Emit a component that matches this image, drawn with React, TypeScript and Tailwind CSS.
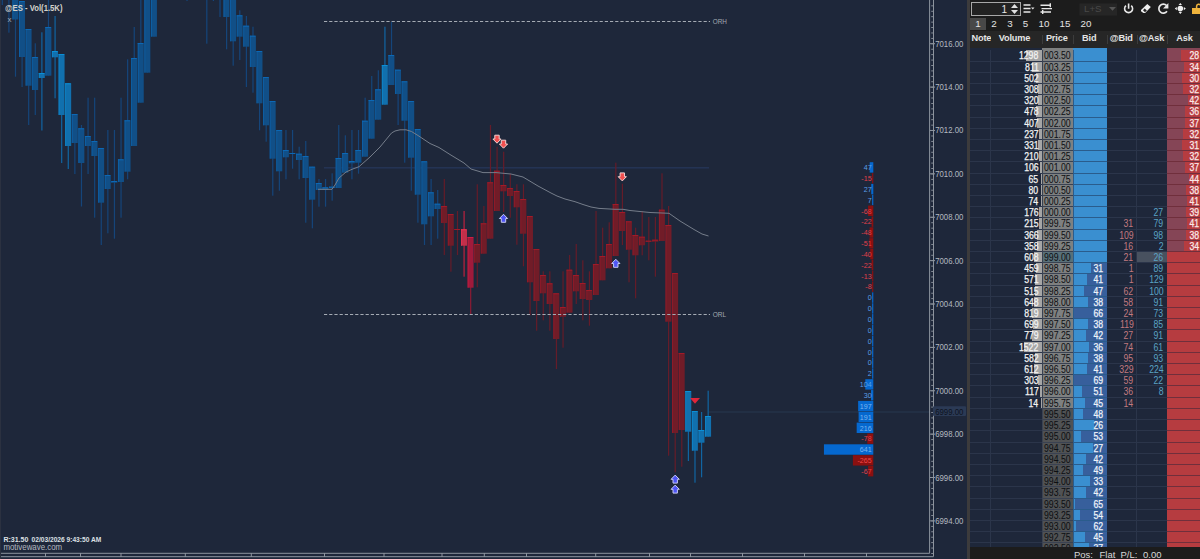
import type { ReactNode } from 'react';

type Tone = 'b' | 'c' | 'r' | 'p' | 'k';
type Candle = [number, number, number, number, number, Tone];

const tones: Record<Tone, { fill: string; edge: string; wick: string }> = {
  b: { fill: '#114f87', edge: '#0c68b5', wick: '#15457a' },
  c: { fill: '#1170ae', edge: '#0b8fd6', wick: '#1165a2' },
  r: { fill: '#711c28', edge: '#a21a28', wick: '#651c29' },
  p: { fill: '#c22f4a', edge: '#ef3350', wick: '#bb213f' },
  k: { fill: '#a01a3b', edge: '#d01d43', wick: '#8d1b34' },
};

// slot, high, body top, body bottom, low
const candles: Candle[] = [
  [0, -5, -9, -8, 5, 'b'],
  [1, -5, -9, -8, 32.7, 'b'],
  [2, -5, -5, 19.5, 76.7, 'b'],
  [3, 1, 1, 57, 87, 'b'],
  [4, 29, 29, 85.7, 125, 'b'],
  [5, 43.3, 57, 90, 115, 'b'],
  [6, 32.3, 73, 78, 130.5, 'c'],
  [7, -5, 27, 75.7, 75.7, 'b'],
  [8, 16, 51, 57.3, 98.3, 'c'],
  [9, 54, 54, 115, 163, 'c'],
  [10, 83.3, 83.3, 146, 169, 'c'],
  [11, 114, 114, 143, 174, 'b'],
  [12, 125, 128.3, 163, 206.5, 'b'],
  [13, 97.7, 136, 146, 174, 'b'],
  [14, 97.7, 141, 156, 217.7, 'b'],
  [15, 148, 148, 202.7, 245, 'b'],
  [16, 130, 175, 189, 233.3, 'b'],
  [17, 130, 181, 182.7, 238.7, 'b'],
  [18, 97.7, 159.3, 182, 217.7, 'b'],
  [19, 59.3, 120.3, 171.7, 179.3, 'b'],
  [20, 27, 58, 146, 146, 'b'],
  [21, -5, 43, 102.7, 102.7, 'b'],
  [22, -5, -5, 72.7, 72.7, 'b'],
  [23, -5, -5, 36.7, 36.7, 'b'],
  [28, -5, -9, -8, 1, 'b'],
  [31, -5, -9, -8, 43.7, 'b'],
  [32, -5, -9, -8, 1, 'b'],
  [33, -5, -9, -8, 17, 'b'],
  [34, -5, -5, 17, 49.3, 'b'],
  [35, -5, -5, 41.3, 65.7, 'b'],
  [36, 10.3, 15.3, 36.7, 60, 'b'],
  [37, 16, 25.7, 46.7, 87, 'b'],
  [38, 26.7, 35.7, 67, 92.7, 'b'],
  [39, 51, 51, 103.3, 130.3, 'b'],
  [40, 77, 77, 125.3, 141.7, 'b'],
  [41, 101, 101, 158.7, 195.7, 'b'],
  [42, 130, 130, 171.3, 190.7, 'b'],
  [43, 130, 150, 157.3, 179.3, 'b'],
  [44, 130, 153, 154, 168.7, 'b'],
  [45, 146.7, 153.7, 160, 179.3, 'b'],
  [46, 141, 156, 178, 222.7, 'b'],
  [47, 166.7, 166.7, 199.7, 228.3, 'b'],
  [48, 179, 183, 190, 206.7, 'b'],
  [49, 179, 187.3, 190, 206.7, 'b'],
  [50, 173.3, 186.7, 188, 200.7, 'b'],
  [51, 125, 158, 188, 188, 'b'],
  [52, 135.3, 153, 172.7, 172.7, 'b'],
  [53, 130, 161, 163.3, 179.3, 'b'],
  [54, 130, 150, 162.7, 173.7, 'b'],
  [55, 97.7, 120.7, 156.7, 156.7, 'b'],
  [56, 76, 100, 138.7, 138.7, 'b'],
  [57, 70.3, 89.3, 119.7, 119.7, 'b'],
  [58, 26.7, 65, 104.7, 104.7, 'c'],
  [59, 22, 55, 85, 85, 'b'],
  [60, 69.7, 69.7, 94, 125, 'b'],
  [61, 81.3, 81.3, 120.7, 162.7, 'b'],
  [62, 101, 101, 157.7, 190.7, 'b'],
  [63, 129, 129, 194.7, 222.7, 'b'],
  [64, 161.3, 161.3, 224.3, 245, 'b'],
  [65, 179, 192.3, 216.3, 245, 'b'],
  [66, 190, 203.7, 209, 238.7, 'b'],
  [67, 179, 206, 223, 255, 'r'],
  [68, 214, 214, 245.7, 271.7, 'r'],
  [69, 211, 229, 229.8, 255, 'r'],
  [70, 211, 229.3, 245.7, 276.7, 'p'],
  [71, 237, 237, 287.7, 315, 'k'],
  [72, 184.3, 244, 262.7, 287.3, 'r'],
  [73, 206, 223.3, 253.7, 253.7, 'r'],
  [74, 125, 182.3, 238.7, 238.7, 'r'],
  [75, 146.7, 170.7, 211, 211, 'r'],
  [76, 151.7, 185, 191.3, 212, 'r'],
  [77, 173.7, 188, 196, 217.7, 'r'],
  [78, 184.3, 191, 207.3, 244.7, 'r'],
  [79, 184.3, 199, 233.7, 266.3, 'r'],
  [80, 216, 216, 282.3, 315.3, 'r'],
  [81, 249, 249, 301, 330.7, 'r'],
  [82, 271.3, 275, 293.3, 320.3, 'r'],
  [83, 271.3, 283.3, 304, 330.7, 'r'],
  [84, 293.3, 293.3, 339, 369, 'r'],
  [85, 271.3, 307, 316.7, 347.7, 'r'],
  [86, 255, 269.7, 312.7, 312.7, 'r'],
  [87, 244, 275, 291.3, 304, 'r'],
  [88, 260.3, 283, 299, 320.3, 'r'],
  [89, 271.3, 290, 300, 325.7, 'r'],
  [90, 211, 264, 295, 295, 'r'],
  [91, 227.7, 256, 280.3, 280.3, 'r'],
  [92, 222.3, 244, 268.3, 268.3, 'r'],
  [93, 162.7, 204, 256, 256, 'r'],
  [94, 183.7, 212, 231, 245, 'r'],
  [95, 221.3, 221.3, 249.7, 282.3, 'r'],
  [96, 227.7, 235, 255.3, 298.3, 'r'],
  [97, 211.3, 236.7, 245.3, 255.3, 'r'],
  [98, 217, 240.7, 241.7, 260.3, 'r'],
  [99, 217, 239.7, 241.7, 276.7, 'r'],
  [100, 173.3, 209.7, 241, 241, 'r'],
  [101, 206, 225, 321.7, 455.7, 'r'],
  [102, 273, 273, 433, 472.3, 'r'],
  [103, 353, 353, 430, 466.7, 'r'],
  [104, 391, 391, 431.7, 461, 'c'],
  [105, 411, 411, 450.7, 482.7, 'c'],
  [106, 412, 430, 442.7, 477.3, 'c'],
  [107, 390.7, 416, 436.7, 436.7, 'c'],
];

const average =
  'M318 189.3H332L335 185L339 178L346 172L352 169.3L359 166.7L370 157L380 147L391.5 133L395 131L400 129.8H406L411.5 131.5L418 135.5L430 143.5L439 147.5L450 154.5L464 163L471 169L483 172.6H496L511 174L523 177L538 186L551 193L557 196L565 199L575 201.7L583 204.5L591 207L599 208.4L615 209.3H623L630 210.5L650 212.5L669 213.3L680 221L694 229.5L702 234L708.5 236';

const delta = [
  47, -15, 27, 7, -68, -22, -48, -51, -40, -22, -13, -8, 0, 0, 0, 0, 0, 0, 0, 2, 104, 30, 197, 191,
  216, -78, 641, -265, -67,
];

const priceLabels = [7016, 7014, 7012, 7010, 7008, 7006, 7004, 7002, 7000, 6998, 6996, 6994];

const timeTicks: [number, string][] = [
  [45.5, '9:00'], [80.5, '9:05'], [121, '7:00'], [185.3, '9:30'], [251.3, '9:32'], [324.5, '9:33'],
  [384, '9:34'], [442, '9:36'], [484.3, '9:36'], [526.5, '9:37'], [595.7, '9:40'], [649.5, '9:42'],
  [690.5, '9:43:45'], [742.5, '10:00'], [804.5, '10:30'], [866.5, '11:00'],
];

function Arrow({ x, y, down }: { x: number; y: number; down?: boolean }) {
  return (
    <path
      d="M0 -4.2L4.1 0H2.2V3.8H-2.2V0H-4.1Z"
      transform={`translate(${x} ${y})${down ? ' rotate(180)' : ''}`}
      fill={down ? '#f04f4f' : '#4f55f5'}
      stroke={down ? '#f3cfcf' : '#c6c9f3'}
      strokeWidth="1"
    />
  );
}

function Chart() {
  return (
    <svg width="967" height="559" viewBox="0 0 967 559" className="block font-['Liberation_Sans',Arial,sans-serif]">
      <rect width="967" height="559" fill="#1e273a" />
      <rect width="1" height="559" fill="#2b3140" />

      <rect x="324" y="167" width="385" height="1.6" fill="#243353" />
      <rect x="709" y="411.5" width="221" height="1" fill="#26384f" />

      {candles.map(([slot, high, top, bottom, low, tone]) => {
        const x = 2.2 + slot * 6.597;
        const c = tones[tone];
        const h = Math.max(bottom - top, 1);
        return (
          <g key={slot}>
            <rect x={x - 0.5} y={high} width="1.2" height={low - high} fill={c.wick} />
            <rect x={x - 3} y={top} width="6" height={h} fill={c.fill} />
            <rect x={x - 3} y={top} width="0.9" height={h} fill={c.edge} opacity="0.7" />
            <rect x={x - 3} y={top} width="5.6" height="1" fill={c.edge} />
          </g>
        );
      })}

      <path d={average} fill="none" stroke="#757d8a" strokeWidth="1" />
      <path d="M324 21.5H710M324 314.5H710" stroke="#a5abb4" strokeWidth="1" strokeDasharray="3.2 2" />
      <g fill="#a3a9b2" fontSize="7.4">
        <text x="712.8" y="23.6" textLength="14.2" lengthAdjust="spacingAndGlyphs">ORH</text>
        <text x="712.8" y="316.6" textLength="13.4" lengthAdjust="spacingAndGlyphs">ORL</text>
      </g>

      <Arrow x={497} y={139} down />
      <Arrow x={503.5} y={144} down />
      <Arrow x={622.3} y={176.7} down />
      <Arrow x={503.5} y={218.5} />
      <Arrow x={615.8} y={263.5} />
      <Arrow x={675.2} y={479.3} />
      <Arrow x={675.2} y={489.3} />
      <path d="M690 398H700L695 403.8Z" fill="#e0263a" />

      {delta.map((v, i) => {
        const w = Math.max(1.2, Math.abs(v) * 0.077);
        const y = 162.2 + i * 10.85;
        const up = v >= 0;
        const wide = w > 12;
        return (
          <g key={i}>
            <rect x={873.3 - w} y={y} width={w} height="10.4" fill={up ? '#0568cf' : '#8a1010'} />
            <text
              x="871.6"
              y={y + 7.9}
              textAnchor="end"
              fontSize="7.1"
              fill={up ? (wide ? '#7bb5f0' : '#5a9fe6') : wide ? '#f04848' : '#e0404a'}
            >
              {v}
            </text>
          </g>
        );
      })}

      {/* price scale */}
      <path d="M929.6 0V553.3M933.5 0V556.5" stroke="#8d949e" strokeWidth="1" />
      {Array.from({ length: 102 }, (_, i) => (
        <rect key={i} x="931.2" y={5.4 + i * 5.422} width="2.3" height="0.9" fill="#8d949e" />
      ))}
      <rect x="933" y="406.3" width="33" height="9.6" rx="1" fill="#2b3a55" />
      <g fontSize="9" fill="#b4b9c0">
        {priceLabels.map((p, i) => (
          <g key={p}>
            <rect x="930" y={43.2 + i * 43.38} width="5" height="1" fill="#8d949e" />
            <text x="935.2" y={46.7 + i * 43.38} textLength="28.2" lengthAdjust="spacingAndGlyphs">
              {p.toFixed(2)}
            </text>
          </g>
        ))}
        <text x="935.2" y="414.7" textLength="28.2" lengthAdjust="spacingAndGlyphs" fill="#0d131f">
          6999.00
        </text>
      </g>

      {/* time scale */}
      <path d="M1 553.3H929.6M1 556.7H933.5" stroke="#8d949e" strokeWidth="1" />
      {timeTicks.map(([x, label]) => (
        <g key={x}>
          <rect x={x - 0.5} y="553" width="1" height="4" fill="#8d949e" />
          <text x={x} y="563.6" textAnchor="middle" fontSize="8" fill="#a3a9b2">{label}</text>
        </g>
      ))}

      <text x="5" y="10.8" fontSize="9" fontWeight="bold" fill="#d5d3cb" textLength="57.5" lengthAdjust="spacingAndGlyphs">
        @ES - Vol(1.5K)
      </text>
      <text x="7.4" y="22" fontSize="8" fill="#a3a9b2">x</text>
      <text x="3.4" y="541.8" fontSize="7.4" fontWeight="bold" fill="#dde0e4" textLength="25" lengthAdjust="spacingAndGlyphs">
        R:31.50
      </text>
      <text x="31.6" y="541.8" fontSize="7" fontWeight="bold" fill="#dde0e4" textLength="69.6" lengthAdjust="spacingAndGlyphs">
        02/03/2026 9:43:50 AM
      </text>
      <text x="3.4" y="550" fontSize="8.6" fill="#b4b9c0" textLength="58.8" lengthAdjust="spacingAndGlyphs">
        motivewave.com
      </text>
    </svg>
  );
}

const volumes = [
  1298, 811, 502, 308, 320, 478, 407, 237, 331, 210, 106, 65, 80, 74, 176, 215, 366, 358, 608, 459,
  571, 515, 648, 819, 699, 779, 1522, 582, 612, 303, 117, 14,
];
const asks = [28, 34, 30, 32, 42, 36, 37, 32, 31, 32, 37, 44, 38, 41, 39, 41, 38, 34];
const bids = [
  31, 41, 47, 38, 66, 38, 42, 36, 38, 41, 69, 51, 45, 48, 26, 53, 27, 42, 49, 33, 42, 65, 54, 62, 45, 37,
];
const atBid = [31, 109, 16, 21, 1, 1, 62, 58, 24, 119, 27, 74, 95, 329, 59, 36, 14];
const atAsk = [27, 79, 98, 2, 26, 89, 129, 100, 91, 73, 85, 91, 61, 93, 224, 22, 8];

const grid = 'grid grid-cols-[20.5px_51px_31.5px_33.5px_30.5px_30px_33px]';

// narrow digits, anchored to the right edge of their cell
function Num({ children }: { children: ReactNode }) {
  return <span className="relative inline-block origin-right scale-x-[0.87]">{children}</span>;
}

function Row({ i }: { i: number }) {
  const price = (7003.5 - i * 0.25).toFixed(2).slice(1);
  const volume = volumes[i];
  const bid = bids[i - 19];
  const ask = asks[i];
  const traded = i < 32;
  const last = i === 18;
  return (
    <div className={`${grid} h-[11.21px] shrink-0 grid-rows-[11.21px] leading-[11.4px] whitespace-nowrap`}>
      <div className="border-r border-b border-[#2b354a]" />
      <div className="relative border-b border-[#2b354a] pr-[3px] text-right text-[#f4f4f4] [-webkit-text-stroke:0.25px]">
        {volume !== undefined && (
          <>
            <div className="absolute inset-y-0 right-0 bg-[#a5a5a5]" style={{ width: volume * 0.0118 }} />
            <Num>{volume}</Num>
          </>
        )}
      </div>
      <div
        className={`flex justify-end border-b border-l border-[#3a4252] pr-[2px] text-[#0c0e12] ${
          last ? 'bg-[#587079]' : traded ? 'bg-[#7e8080]' : 'bg-[#505254]'
        }`}
      >
        <Num>{price}</Num>
      </div>
      <div className="relative border-b border-l border-[#2a5c8c] bg-[#3a8fd0] pr-[3px] text-right text-[#eef3fa] [-webkit-text-stroke:0.25px]">
        {bid !== undefined && (
          <>
            <div className="absolute inset-y-0 right-0 bg-[#375f9c]" style={{ width: Math.min(bid * 0.486, 32.5) }} />
            <Num>{bid}</Num>
          </>
        )}
      </div>
      <div className="border-r border-b border-[#2b354a] pr-[2.5px] text-right text-[#c27a80]">
        <Num>{atBid[i - 15]}</Num>
      </div>
      <div className={`border-b border-[#2b354a] pr-[3.5px] text-right text-[#5ba3c4] ${last ? 'bg-[#48515f]' : ''}`}>
        <Num>{atAsk[i - 14]}</Num>
      </div>
      <div className="relative border-b border-[#702f3c] bg-[#b63c40] pr-[1px] text-right text-[#fae8e8] [-webkit-text-stroke:0.25px]">
        {ask !== undefined && (
          <>
            <div className="absolute inset-y-0 left-0 bg-[#854556]" style={{ width: ask * 0.49 }} />
            <Num>{ask}</Num>
          </>
        )}
      </div>
    </div>
  );
}

function Toolbar() {
  return (
    <div className="flex h-[18px] items-center">
      <div className="ml-[1px] flex h-[14px] w-[50px] shrink-0 items-center justify-end border border-[#a8a8a8] bg-[#222] pr-[2px] text-[10px] text-[#e8e8e8]">
        <span>1</span>
        <svg width="7" height="10" className="ml-[4px]">
          <path d="M0 4L3.5 0L7 4ZM0 6L3.5 10L7 6Z" fill="#e0e0e0" />
        </svg>
      </div>
      <svg width="179" height="18" viewBox="1021 0 179 18" className="block shrink-0">
        <g stroke="#e8e8e8" strokeWidth="1.4" fill="none">
          <path d="M1023.5 5H1030.5M1023.5 8.5H1030.5M1023.5 12H1030.5" />
          <path d="M1040.5 5.3H1051M1041.5 8.6H1052M1040.5 12H1051" />
          <path d="M1050.3 3.3V7.3M1042.7 10V14" />
          <path d="M1126 5.6A4 4 0 1 0 1131.2 5.6M1128.6 3.4V8.8" strokeWidth="1.6" />
          <path d="M1166.6 5.5A4.5 4.5 0 1 0 1167 11.3" strokeWidth="1.7" />
        </g>
        <path d="M1031 7.4H1034.5L1032.8 9.6Z" fill="#e2e2e2" />
        <rect x="1079.5" y="3.5" width="37.5" height="12" fill="#262626" />
        <text x="1084" y="12.2" fontSize="9.4" fill="#494949" textLength="17.5" lengthAdjust="spacingAndGlyphs">L+S</text>
        <path d="M1109 7H1116L1112.5 10.8Z" fill="#555" />
        <path d="M1141 10L1147.3 4L1150.8 7L1145.2 13H1143.4L1141 11.2Z" fill="#eee" />
        <path d="M1143 10.3L1144.7 8.6L1146.8 10.4L1145 12.2Z" fill="#252525" />
        <path d="M1168.4 3V8.6H1163Z" fill="#e8e8e8" />
        <circle cx="1180.3" cy="8.6" r="2.8" fill="#eee" />
        <path d="M1180.3 3.1L1182 5.1H1178.6ZM1180.3 14.1L1182 12.1H1178.6ZM1174.8 8.6L1176.8 6.9V10.3ZM1185.8 8.6L1183.8 6.9V10.3Z" fill="#eee" />
        <rect x="1192" y="8" width="9" height="6" fill="#f0b43c" />
        <path d="M1196.6 8V6A2.2 2.2 0 0 1 1200.5 5" stroke="#f0b43c" strokeWidth="1.5" fill="none" />
      </svg>
    </div>
  );
}

export default function App() {
  return (
    <main className="flex h-[559px] w-[1200px] overflow-hidden bg-[#1e273a] font-['Liberation_Sans',Arial,sans-serif]">
      <div className="w-[967px] shrink-0">
        <Chart />
      </div>
      <section className="flex w-[233px] shrink-0 flex-col overflow-hidden border-l-[3px] border-[#3c3b3c] bg-[#1c1c1c]">
        <Toolbar />
        <div className="flex h-[13px] text-[9.8px] leading-[12px] text-[#e4e4e4]">
          <span className="h-[12px] w-[16px] bg-[#484848] text-center">1</span>
          <span className="w-[16px] text-center">2</span>
          <span className="w-[16px] text-center">3</span>
          <span className="w-[15px] text-center">5</span>
          <span className="w-[22px] text-center">10</span>
          <span className="w-[20px] text-center">15</span>
          <span className="w-[22px] text-center">20</span>
        </div>
        <div className={`${grid} h-[17px] shrink-0 bg-[#262626] text-center text-[9.2px] leading-[15.5px] font-bold tracking-[-0.15px] text-[#e4e4e4]`}>
          <span className="overflow-hidden pl-[1.5px] text-left">Note</span>
          <span className="pr-[3px]">Volume</span>
          <span className="my-[4px] border-l border-[#3c3c3c] pr-[2px] leading-[7.5px]">Price</span>
          <span className="my-[4px] border-l border-[#3c3c3c] pr-[2px] leading-[7.5px]">Bid</span>
          <span className="my-[4px] border-l border-[#3c3c3c] pr-[2px] leading-[7.5px]">@Bid</span>
          <span className="my-[4px] border-l border-[#3c3c3c] pr-[2px] leading-[7.5px]">@Ask</span>
          <span className="my-[4px] border-l border-[#3c3c3c] pl-px leading-[7.5px]">Ask</span>
        </div>
        <div className="flex h-[498.5px] shrink-0 flex-col overflow-hidden bg-[#1e273a] text-[10px]">
          <div className={`${grid} h-[2.4px] shrink-0`}>
            <div />
            <div />
            <div className="bg-[#7e8080]" />
            <div className="bg-[#3a8fd0]" />
            <div />
            <div />
            <div className="bg-[#854556]" />
          </div>
          {Array.from({ length: 45 }, (_, i) => (
            <Row key={i} i={i} />
          ))}
        </div>
        <div className="flex h-[12.5px] shrink-0 pl-[104px] text-[9.5px] leading-[16px] text-[#d8d8d8]">
          <span className="w-[25.5px]">Pos:</span>
          <span className="w-[21px]">Flat</span>
          <span className="w-[22.5px]">P/L:</span>
          <span>0.00</span>
        </div>
      </section>
    </main>
  );
}
